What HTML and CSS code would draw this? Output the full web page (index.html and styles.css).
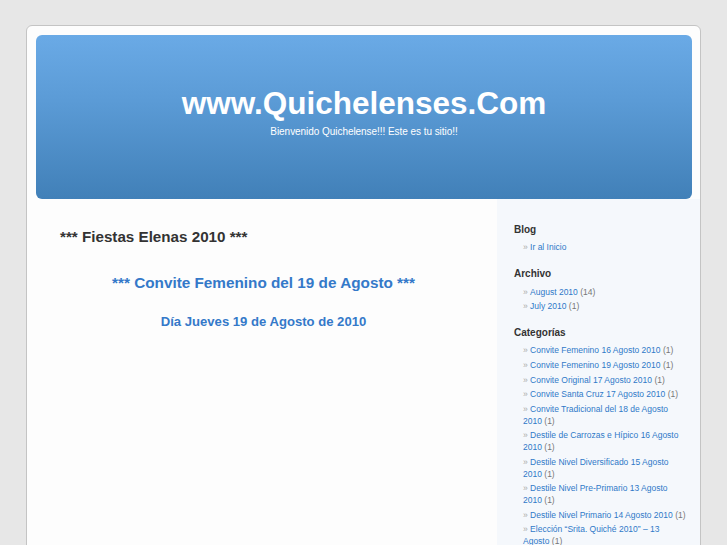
FILE: index.html
```html
<!DOCTYPE html>
<html lang="es">
<head>
<meta charset="utf-8">
<title>www.Quichelenses.Com</title>
<link rel="stylesheet" href="styles.css">
</head>
<body>
<div class="page">
  <header class="header">
    <h1 class="site-title">www.Quichelenses.Com</h1>
    <div class="description">Bienvenido Quichelense!!! Este es tu sitio!!</div>
  </header>
  <div class="body-row">
    <main class="content">
      <h2 class="post-title">*** Fiestas Elenas 2010 ***</h2>
      <h3 class="post-sub">*** Convite Femenino del 19 de Agosto ***</h3>
      <h4 class="post-date">Día Jueves 19 de Agosto de 2010</h4>
    </main>
    <aside class="sidebar">
      <h5 class="widget-title">Blog</h5>
      <ul class="widget-list">
        <li><a href="#">Ir al Inicio</a></li>
      </ul>
      <h5 class="widget-title">Archivo</h5>
      <ul class="widget-list">
        <li><a href="#">August 2010</a> <span class="count">(14)</span></li>
        <li><a href="#">July 2010</a> <span class="count">(1)</span></li>
      </ul>
      <h5 class="widget-title">Categorías</h5>
      <ul class="widget-list">
        <li><a href="#">Convite Femenino 16 Agosto 2010</a> <span class="count">(1)</span></li>
        <li><a href="#">Convite Femenino 19 Agosto 2010</a> <span class="count">(1)</span></li>
        <li><a href="#">Convite Original 17 Agosto 2010</a> <span class="count">(1)</span></li>
        <li><a href="#">Convite Santa Cruz 17 Agosto 2010</a> <span class="count">(1)</span></li>
        <li><a href="#">Convite Tradicional del 18 de Agosto 2010</a> <span class="count">(1)</span></li>
        <li><a href="#">Destile de Carrozas e Hípico 16 Agosto 2010</a> <span class="count">(1)</span></li>
        <li><a href="#">Destile Nivel Diversificado 15 Agosto 2010</a> <span class="count">(1)</span></li>
        <li><a href="#">Destile Nivel Pre-Primario 13 Agosto 2010</a> <span class="count">(1)</span></li>
        <li><a href="#">Destile Nivel Primario 14 Agosto 2010</a> <span class="count">(1)</span></li>
        <li><a href="#">Elección “Srita. Quiché 2010” – 13 Agosto</a> <span class="count">(1)</span></li>
        <li><a href="#">Fiestas Elenas 2010</a> <span class="count">(1)</span></li>
      </ul>
    </aside>
  </div>
</div>
</body>
</html>
```
FILE: styles.css
```css
html, body {
  margin: 0;
  padding: 0;
}
body {
  background: #e7e7e7;
  font-family: "Liberation Sans", Arial, sans-serif;
  color: #333;
  padding-top: 25px;
  padding-left: 26px;
}
.page {
  width: 673px;
  background: #fdfdfd;
  border: 1px solid #c4c4c4;
  border-radius: 6px 6px 0 0;
  overflow: hidden;
  min-height: 560px;
  display: flex;
  flex-direction: column;
}
.header {
  margin: 9px 8px 0 9px;
  height: 164px;
  box-sizing: border-box;
  padding-top: 50px;
  border-radius: 6px;
  background: linear-gradient(to bottom, #6aaae6 0%, #5b9bd6 40%, #4180b8 100%);
  text-align: center;
  color: #fff;
}
.site-title {
  margin: 0;
  font-size: 31.5px;
  line-height: 36px;
  font-weight: bold;
  color: #fff;
}
.description {
  margin-top: 4.5px;
  font-size: 10px;
  line-height: 12px;
  letter-spacing: -0.05px;
}
.body-row {
  display: flex;
  flex: 1;
}
.content {
  flex: 1;
  padding: 29.3px 30px 0 33px;
  background: #fdfdfd;
}
.post-title {
  margin: 0;
  font-size: 15.2px;
  line-height: 18px;
  font-weight: bold;
  color: #333;
}
.post-sub {
  margin: 27.7px 0 0;
  font-size: 15.3px;
  line-height: 18px;
  font-weight: bold;
  color: #3479c9;
  text-align: center;
}
.post-date {
  margin: 22.2px 0 0;
  font-size: 13.1px;
  line-height: 16px;
  font-weight: bold;
  color: #3479c9;
  text-align: center;
}
.sidebar {
  width: 203px;
  box-sizing: border-box;
  padding: 24.8px 12.6px 0 17px;
  background: #f5f8fc;
}
.widget-title {
  margin: 0;
  font-size: 10px;
  line-height: 12px;
  font-weight: bold;
  color: #333;
}
.widget-list {
  list-style: none;
  margin: 5.5px 0 14.8px;
  padding: 0 0 0 9px;
}
.widget-list li {
  font-size: 8.5px;
  line-height: 12px;
  margin-bottom: 2.55px;
  color: #777;
}
.widget-list li::before {
  content: "\00BB\00A0";
  color: #aaa;
}
.widget-list a {
  color: #2f78c8;
  text-decoration: none;
}
.count {
  color: #777;
}
```
